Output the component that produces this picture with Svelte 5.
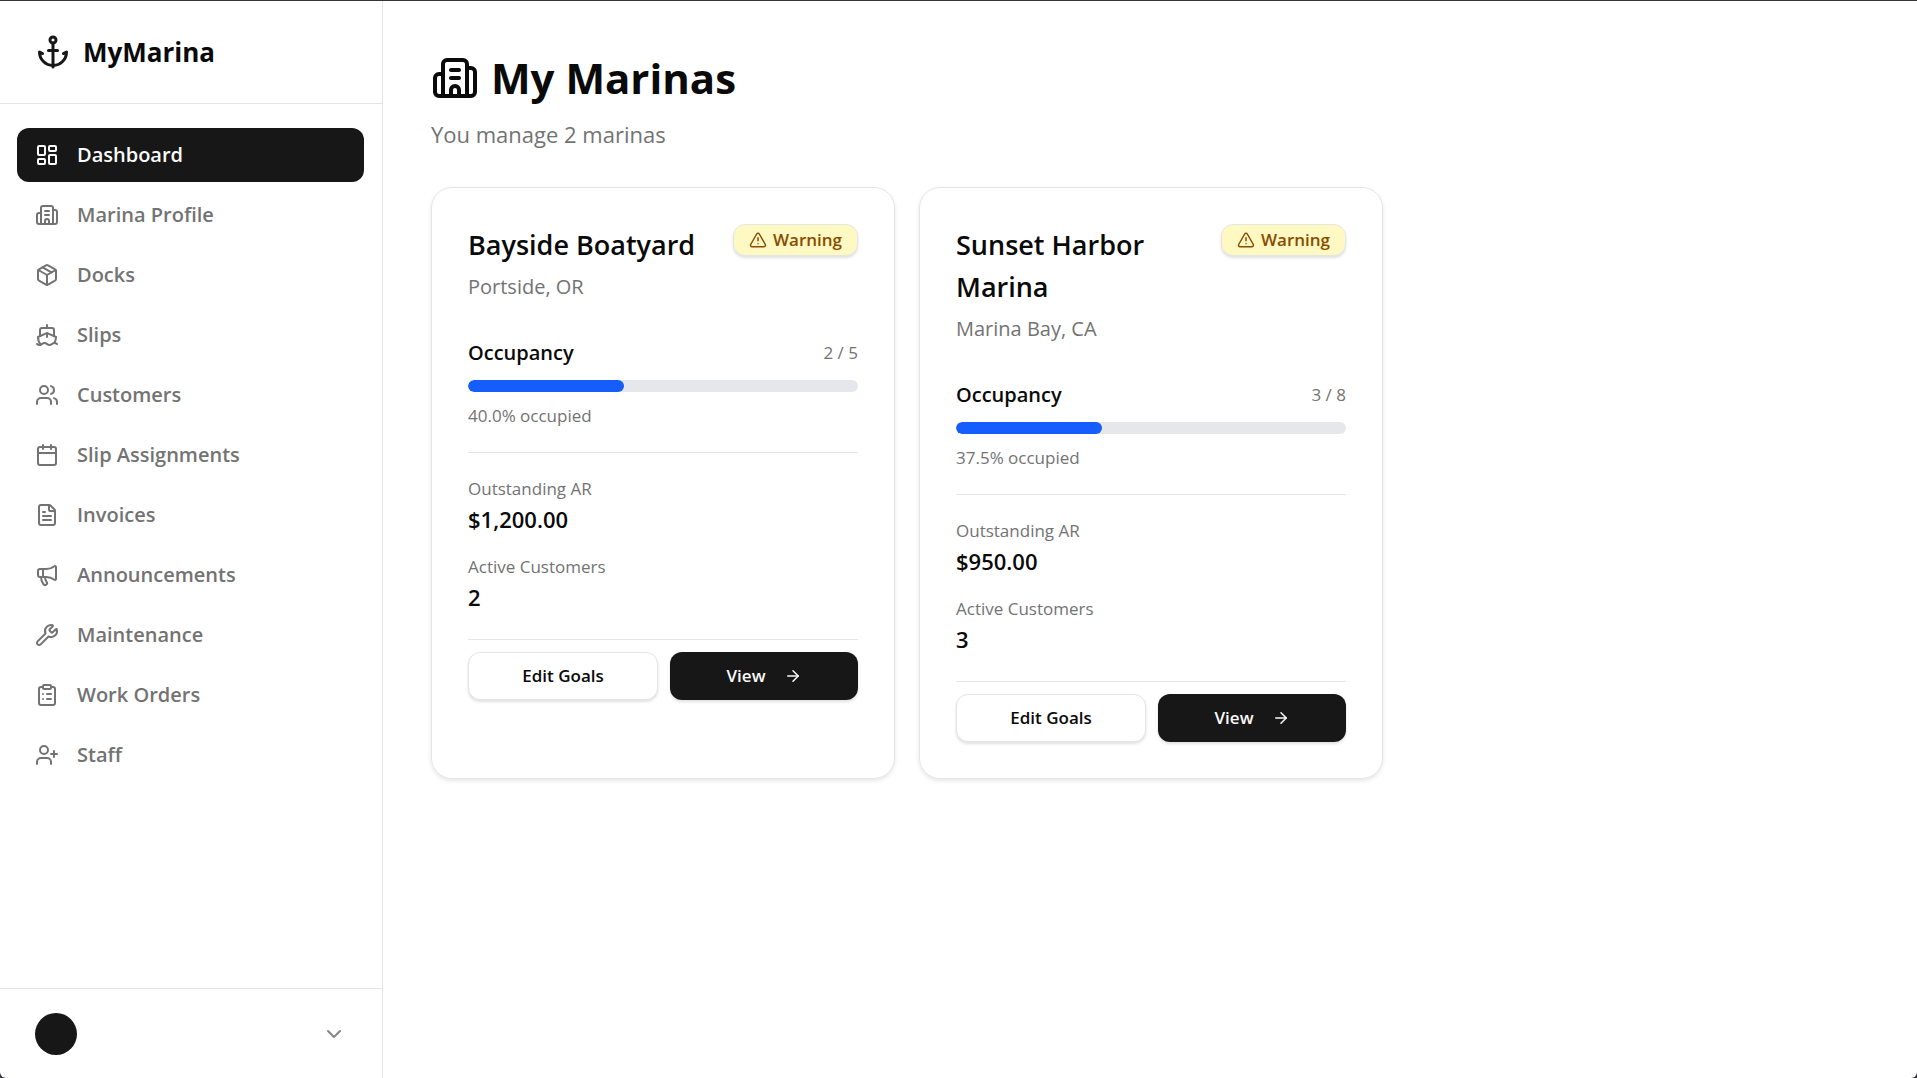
<script>
  const nav = [
    { label: 'Dashboard', icon: 'dashboard', active: true },
    { label: 'Marina Profile', icon: 'building' },
    { label: 'Docks', icon: 'package' },
    { label: 'Slips', icon: 'ship' },
    { label: 'Customers', icon: 'users' },
    { label: 'Slip Assignments', icon: 'calendar' },
    { label: 'Invoices', icon: 'file' },
    { label: 'Announcements', icon: 'megaphone' },
    { label: 'Maintenance', icon: 'wrench' },
    { label: 'Work Orders', icon: 'clipboard' },
    { label: 'Staff', icon: 'userPlus' },
  ];

  const marinas = [
    { name: 'Bayside Boatyard', location: 'Portside, OR', used: 2, total: 5, ar: '$1,200.00', customers: 2 },
    { name: 'Sunset Harbor Marina', location: 'Marina Bay, CA', used: 3, total: 8, ar: '$950.00', customers: 3 },
  ];

  const percent = (m) => ((m.used / m.total) * 100).toFixed(1);

  const icons = {
    anchor: ['M12 6v16', 'm19 13 2-1a9 9 0 0 1-18 0l2 1', 'M9 11h6', 'M14 4a2 2 0 1 1-4 0 2 2 0 0 1 4 0'],
    dashboard: [
      'M4 3h5a1 1 0 0 1 1 1v7a1 1 0 0 1-1 1H4a1 1 0 0 1-1-1V4a1 1 0 0 1 1-1z',
      'M15 3h5a1 1 0 0 1 1 1v3a1 1 0 0 1-1 1h-5a1 1 0 0 1-1-1V4a1 1 0 0 1 1-1z',
      'M15 12h5a1 1 0 0 1 1 1v7a1 1 0 0 1-1 1h-5a1 1 0 0 1-1-1v-7a1 1 0 0 1 1-1z',
      'M4 16h5a1 1 0 0 1 1 1v3a1 1 0 0 1-1 1H4a1 1 0 0 1-1-1v-3a1 1 0 0 1 1-1z',
    ],
    building: [
      'M10 12h4',
      'M10 8h4',
      'M14 21v-3a2 2 0 0 0-4 0v3',
      'M6 10H4a2 2 0 0 0-2 2v7a2 2 0 0 0 2 2h16a2 2 0 0 0 2-2V9a2 2 0 0 0-2-2h-2',
      'M6 21V5a2 2 0 0 1 2-2h8a2 2 0 0 1 2 2v16',
    ],
    package: [
      'M11 21.73a2 2 0 0 0 2 0l7-4A2 2 0 0 0 21 16V8a2 2 0 0 0-1-1.73l-7-4a2 2 0 0 0-2 0l-7 4A2 2 0 0 0 3 8v8a2 2 0 0 0 1 1.73z',
      'M12 22V12',
      'M3.29 7 12 12l8.71-5',
      'm7.5 4.27 9 5.15',
    ],
    ship: [
      'M12 10.189V14',
      'M12 2v3',
      'M19 13V7a2 2 0 0 0-2-2H7a2 2 0 0 0-2 2v6',
      'M19.38 20A11.6 11.6 0 0 0 21 14l-8.188-3.639a2 2 0 0 0-1.624 0L3 14a11.6 11.6 0 0 0 2.81 7.76',
      'M2 21c.6.5 1.2 1 2.5 1 2.5 0 2.5-2 5-2 1.3 0 1.9.5 2.5 1s1.2 1 2.5 1c2.5 0 2.5-2 5-2 1.3 0 1.9.5 2.5 1',
    ],
    users: [
      'M16 21v-2a4 4 0 0 0-4-4H6a4 4 0 0 0-4 4v2',
      'M16 3.128a4 4 0 0 1 0 7.744',
      'M22 21v-2a4 4 0 0 0-3-3.87',
      'M13 7a4 4 0 1 1-8 0 4 4 0 0 1 8 0',
    ],
    calendar: ['M8 2v4', 'M16 2v4', 'M5 4h14a2 2 0 0 1 2 2v14a2 2 0 0 1-2 2H5a2 2 0 0 1-2-2V6a2 2 0 0 1 2-2z', 'M3 10h18'],
    file: [
      'M6 22a2 2 0 0 1-2-2V4a2 2 0 0 1 2-2h8a2.4 2.4 0 0 1 1.704.706l3.588 3.588A2.4 2.4 0 0 1 20 8v12a2 2 0 0 1-2 2z',
      'M14 2v5a1 1 0 0 0 1 1h5',
      'M10 9H8',
      'M16 13H8',
      'M16 17H8',
    ],
    megaphone: [
      'M11 6a13 13 0 0 0 8.4-2.8A1 1 0 0 1 21 4v12a1 1 0 0 1-1.6.8A13 13 0 0 0 11 14H5a2 2 0 0 1-2-2V8a2 2 0 0 1 2-2z',
      'M6 14a12 12 0 0 0 2.4 7.2 2 2 0 0 0 3.2-2.4A8 8 0 0 1 10 14',
      'M8 6v8',
    ],
    wrench: [
      'M14.7 6.3a1 1 0 0 0 0 1.4l1.6 1.6a1 1 0 0 0 1.4 0l3.106-3.105c.32-.322.863-.22.983.218a6 6 0 0 1-8.259 7.057l-7.91 7.91a1 1 0 0 1-2.999-3l7.91-7.91a6 6 0 0 1 7.057-8.259c.438.12.54.662.219.984z',
    ],
    clipboard: [
      'M9 2h6a1 1 0 0 1 1 1v2a1 1 0 0 1-1 1H9a1 1 0 0 1-1-1V3a1 1 0 0 1 1-1z',
      'M16 4h2a2 2 0 0 1 2 2v14a2 2 0 0 1-2 2H6a2 2 0 0 1-2-2V6a2 2 0 0 1 2-2h2',
      'M12 11h4',
      'M12 16h4',
      'M8 11h.01',
      'M8 16h.01',
    ],
    userPlus: [
      'M16 21v-2a4 4 0 0 0-4-4H6a4 4 0 0 0-4 4v2',
      'M13 7a4 4 0 1 1-8 0 4 4 0 0 1 8 0',
      'M19 8v6',
      'M22 11h-6',
    ],
    warning: ['m21.73 18-8-14a2 2 0 0 0-3.48 0l-8 14A2 2 0 0 0 4 21h16a2 2 0 0 0 1.73-3', 'M12 9v4', 'M12 17h.01'],
    arrow: ['M5 12h14', 'm12 5 7 7-7 7'],
    chevron: ['m6 9 6 6 6-6'],
  };
</script>

{#snippet icon(name, size)}
  <svg class="icon {size}" viewBox="0 0 24 24" aria-hidden="true">
    {#each icons[name] as d}
      <path {d} />
    {/each}
  </svg>
{/snippet}

<div class="shell">
  <aside class="sidebar">
    <div class="brand">
      {@render icon('anchor', 'lg')}
      <span>MyMarina</span>
    </div>
    <nav class="nav" aria-label="Main">
      {#each nav as item}
        <a href="#{item.icon}" class:active={item.active} aria-current={item.active ? 'page' : undefined}>
          {@render icon(item.icon, 'md')}
          <span>{item.label}</span>
        </a>
      {/each}
    </nav>
    <div class="account">
      <button class="account-button" type="button" aria-label="Account menu">
        <span class="avatar"></span>
        {@render icon('chevron', 'md')}
      </button>
    </div>
  </aside>

  <main class="main">
    <header class="page-header">
      <h1>
        {@render icon('building', 'xl')}
        <span>My Marinas</span>
      </h1>
      <p>You manage 2 marinas</p>
    </header>

    <section class="cards">
      {#each marinas as m}
        <article class="card">
          <div class="card-head">
            <div class="card-title">
              <h2>{m.name}</h2>
              <p>{m.location}</p>
            </div>
            <span class="badge">
              {@render icon('warning', 'sm')}
              Warning
            </span>
          </div>

          <div class="occupancy">
            <div class="occupancy-head">
              <h3>Occupancy</h3>
              <span class="small">{m.used} / {m.total}</span>
            </div>
            <div class="track">
              <div class="fill" style="width: {percent(m)}%"></div>
            </div>
            <p class="small">{percent(m)}% occupied</p>
          </div>

          <dl class="stats">
            <div>
              <dt class="small">Outstanding AR</dt>
              <dd>{m.ar}</dd>
            </div>
            <div>
              <dt class="small">Active Customers</dt>
              <dd>{m.customers}</dd>
            </div>
          </dl>

          <div class="actions">
            <button class="btn outline" type="button">Edit Goals</button>
            <button class="btn primary" type="button">
              View
              {@render icon('arrow', 'sm')}
            </button>
          </div>
        </article>
      {/each}
    </section>
  </main>
</div>

<style>
  :global(body) {
    margin: 0;
    background: #35343a;
  }

  :global(*) {
    box-sizing: border-box;
  }

  .shell {
    display: flex;
    min-height: calc(100vh - 1px);
    margin-top: 1px;
    overflow: hidden;
    border-radius: 0 0 6px 6px;
    background: #fff;
    color: #0a0a0a;
    font-family: 'Segoe UI', 'Open Sans', 'Noto Sans', sans-serif;
    font-size: 20px;
    line-height: 30px;
  }

  h1,
  h2,
  h3,
  p,
  dl,
  dd {
    margin: 0;
  }

  button {
    font: inherit;
    color: inherit;
    cursor: pointer;
  }

  .icon {
    flex: none;
    fill: none;
    stroke: currentColor;
    stroke-width: 2;
    stroke-linecap: round;
    stroke-linejoin: round;
  }

  .sm {
    width: 18px;
    height: 18px;
  }

  .md {
    width: 24px;
    height: 24px;
  }

  .lg {
    width: 36px;
    height: 36px;
  }

  .xl {
    width: 48px;
    height: 48px;
  }

  .sidebar {
    display: flex;
    flex: none;
    flex-direction: column;
    width: 383px;
    border-right: 1px solid #e5e5e5;
  }

  .brand {
    display: flex;
    align-items: center;
    gap: 12px;
    height: 103px;
    padding: 0 35px;
    border-bottom: 1px solid #e5e5e5;
    font-size: 26px;
    font-weight: 700;
  }

  .brand .icon {
    color: #171717;
  }

  .nav {
    display: flex;
    flex: 1;
    flex-direction: column;
    gap: 6px;
    padding: 24px 18px 24px 17px;
  }

  .nav a {
    display: flex;
    align-items: center;
    gap: 18px;
    padding: 12px 18px;
    border-radius: 12px;
    color: #737373;
    font-weight: 600;
    text-decoration: none;
  }

  .nav a.active {
    background: #171717;
    color: #fafafa;
  }

  .account {
    padding: 18px 18px 17px 17px;
    border-top: 1px solid #e5e5e5;
  }

  .account-button {
    display: flex;
    align-items: center;
    justify-content: space-between;
    width: 100%;
    padding: 6px 18px;
    border: 0;
    border-radius: 12px;
    background: none;
    color: #858585;
  }

  .avatar {
    width: 42px;
    height: 42px;
    border-radius: 50%;
    background: #171717;
  }

  .main {
    flex: 1;
    min-width: 0;
    padding: 47px 46px 48px 48px;
  }

  .page-header {
    display: flex;
    flex-direction: column;
    gap: 8px;
    margin-bottom: 35px;
  }

  h1 {
    display: flex;
    align-items: center;
    gap: 12px;
    font-size: 42px;
    font-weight: 700;
    line-height: 60px;
  }

  .page-header p {
    color: #737373;
    font-size: 22px;
    line-height: 36px;
  }

  .cards {
    display: grid;
    grid-template-columns: repeat(3, minmax(0, 1fr));
    gap: 24px;
  }

  .card {
    padding: 36px;
    border: 1px solid #e5e5e5;
    border-radius: 21px;
    box-shadow: 0 2px 4px rgb(0 0 0 / 10%);
  }

  .card-head {
    display: flex;
    align-items: flex-start;
    justify-content: space-between;
    gap: 12px;
    margin-bottom: 36px;
  }

  .card-title {
    display: flex;
    flex: 1;
    flex-direction: column;
    gap: 6px;
  }

  h2 {
    font-size: 27px;
    font-weight: 600;
    line-height: 42px;
  }

  .card-title p {
    color: #737373;
  }

  .badge {
    display: flex;
    flex: none;
    align-items: center;
    gap: 6px;
    padding: 3px 15px;
    border: 1px solid #e5e5e5;
    border-radius: 12px;
    background: #fef9c2;
    box-shadow: 0 2px 3px rgb(0 0 0 / 12%);
    color: #894b00;
    font-size: 17px;
    font-weight: 600;
    line-height: 24px;
  }

  .occupancy {
    display: flex;
    flex-direction: column;
    gap: 12px;
    margin-bottom: 24px;
  }

  .occupancy-head {
    display: flex;
    align-items: center;
    justify-content: space-between;
  }

  h3 {
    font-size: 20px;
    font-weight: 600;
  }

  .small {
    color: #737373;
    font-size: 17px;
    line-height: 24px;
  }

  .track {
    height: 12px;
    overflow: hidden;
    border-radius: 6px;
    background: #e5e7eb;
  }

  .fill {
    height: 100%;
    border-radius: 6px;
    background: #155dfc;
  }

  .stats {
    display: flex;
    flex-direction: column;
    gap: 18px;
    padding: 24px 0;
    border-top: 1px solid #e5e5e5;
  }

  dd {
    font-size: 22px;
    font-weight: 600;
    line-height: 36px;
  }

  .actions {
    display: flex;
    gap: 12px;
    padding-top: 12px;
    border-top: 1px solid #e5e5e5;
  }

  .btn {
    display: flex;
    flex: 1;
    align-items: center;
    justify-content: center;
    gap: 18px;
    height: 48px;
    padding: 0 18px;
    border: 0;
    border-radius: 12px;
    box-shadow: 0 2px 3px rgb(0 0 0 / 12%);
    font-size: 17px;
    font-weight: 600;
    line-height: 24px;
  }

  .outline {
    border: 1px solid #e5e5e5;
    background: #fff;
  }

  .primary {
    background: #171717;
    color: #fafafa;
  }
</style>
